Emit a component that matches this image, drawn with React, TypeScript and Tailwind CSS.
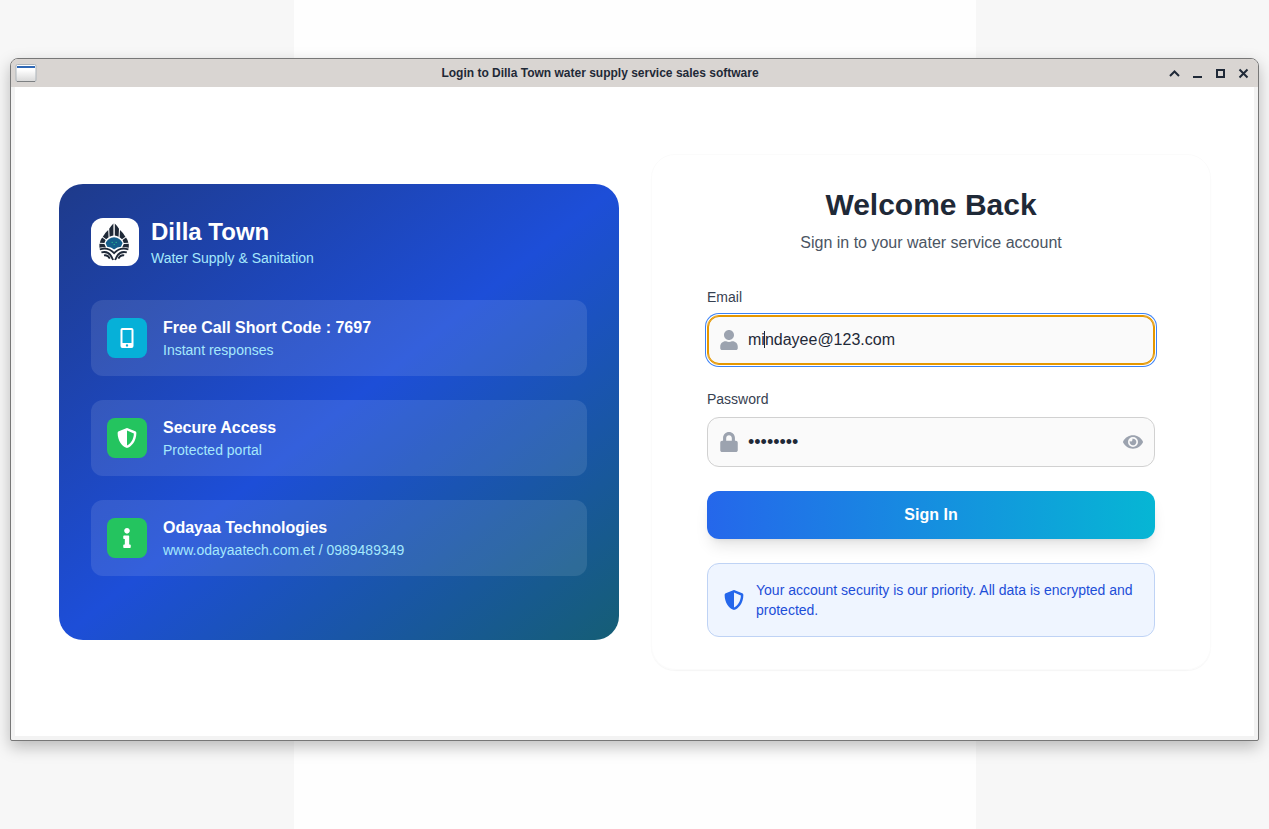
import * as React from "react";
import { FaEye, FaInfo, FaLock, FaShieldAlt, FaUser } from "react-icons/fa";

interface FeatureProps {
  icon: React.ReactNode;
  color: string;
  title: string;
  detail: string;
}

const PhoneIcon = () => (
  <svg viewBox="0 0 20 20" className="h-5 w-5" fill="currentColor" aria-hidden="true">
    <path
      fillRule="evenodd"
      d="M5.4 0 H14.6 Q16.5 0 16.5 1.9 V18.1 Q16.5 20 14.6 20 H5.4 Q3.5 20 3.5 18.1 V1.9 Q3.5 0 5.4 0 Z M5.5 1.9 V14.9 H14.5 V1.9 Z M10 16.2 A1.2 1.2 0 1 0 10 18.6 A1.2 1.2 0 1 0 10 16.2 Z"
    />
  </svg>
);

const FEATURES: FeatureProps[] = [
  {
    icon: <PhoneIcon />,
    color: "bg-[#06b0d8]",
    title: "Free Call Short Code : 7697",
    detail: "Instant responses",
  },
  {
    icon: <FaShieldAlt className="h-5 w-5" />,
    color: "bg-[#24c45f]",
    title: "Secure Access",
    detail: "Protected portal",
  },
  {
    icon: <FaInfo className="h-5 w-5" />,
    color: "bg-[#24c45f]",
    title: "Odayaa Technologies",
    detail: "www.odayaatech.com.et / 0989489349",
  },
];

const Feature = ({ icon, color, title, detail }: FeatureProps) => (
  <li className="flex items-center gap-4 rounded-xl bg-white/10 p-4">
    <div className={`flex h-10 w-10 shrink-0 items-center justify-center rounded-lg text-white ${color}`}>
      {icon}
    </div>
    <div>
      <h3 className="text-base font-bold text-white">{title}</h3>
      <p className="text-sm text-[#a5e8fc]">{detail}</p>
    </div>
  </li>
);

const Logo = () => (
  <svg viewBox="0 0 48 48" className="h-12 w-12" aria-hidden="true">
    <g fill="#1f2937">
      {/* Petals */}
      <path d="M22.4 5.6 L22.4 17.6 Q20.4 17.8 18.6 18.8 L18.2 10.8 Q20 8 22.4 5.6 Z" />
      <path d="M23.8 5.6 L23.8 17.6 Q25.8 17.8 27.6 18.8 L28 10.8 Q26.2 8 23.8 5.6 Z" />
      <path d="M17.2 12 L17.6 19.2 L15.2 21.2 L11.8 18.8 Q13.8 15 17.2 12 Z" />
      <path d="M29 12 L28.6 19.2 L31 21.2 L34.4 18.8 Q32.4 15 29 12 Z" />
      <path d="M11.2 19.6 L14.6 22 L13.4 24.9 L8.8 24.7 Q9.4 22 11.2 19.6 Z" />
      <path d="M35 19.6 L31.6 22 L32.8 24.9 L37.4 24.7 Q36.8 22 35 19.6 Z" />
      <path d="M8.4 25.7 L13.4 25.9 L15 29.6 Q11 28.9 8.4 29.8 Z" />
      <path d="M37.8 25.7 L32.8 25.9 L31.2 29.6 Q35.2 28.9 37.8 29.8 Z" />
    </g>
    {/* Water drop core */}
    <path
      d="M14.6 25 Q17 19.6 23.1 19.2 Q29.2 19.6 31.6 25 L30 28.8 Q26 29 23.1 31.6 Q20.2 29 16.2 28.8 Z"
      fill="#155e8a"
    />
    <path d="M20.6 24.4h1.2M24.6 24.4h1.2M22.6 26.6h1.2" stroke="#2cc08d" strokeWidth="1" />
    <g fill="none" stroke="#1f2937" strokeWidth="1.8">
      <path d="M8.8 31.4 Q17.4 28.8 23.1 35.2 Q28.8 28.8 37.4 31.4" />
      <path d="M10.4 34.4 Q18.6 32.2 22.1 42" />
      <path d="M35.8 34.4 Q27.6 32.2 24.1 42" />
      <path d="M13 37.4 Q17 36.6 18.8 40.6" />
      <path d="M33.2 37.4 Q29.2 36.6 27.4 40.6" />
    </g>
  </svg>
);

interface WindowButtonProps {
  label: string;
  path: string;
}

const WINDOW_BUTTONS: WindowButtonProps[] = [
  { label: "Roll up", path: "M2 9 L6.5 4.5 L11 9" },
  { label: "Minimize", path: "M2 10 H11" },
  { label: "Maximize", path: "M3 3 H10 V10 H3 Z" },
  { label: "Close", path: "M2.5 2.5 L10.5 10.5 M10.5 2.5 L2.5 10.5" },
];

const TitleBar = () => (
  <header className="flex h-7 items-center bg-[#d9d5d2] pr-[3px] pl-1">
    <svg viewBox="0 0 22 18" className="h-[18px] w-[22px]" aria-hidden="true">
      <defs>
        <linearGradient id="pane" x1="0" y1="0" x2="0" y2="1">
          <stop offset="0.3" stopColor="#ffffff" />
          <stop offset="1" stopColor="#d8d8d8" />
        </linearGradient>
      </defs>
      <rect x="1" y="0.5" width="20" height="17" rx="1.5" fill="url(#pane)" stroke="#adb5bb" />
      <path d="M2 3 H20" stroke="#2f68b5" strokeWidth="2" />
      <path d="M2 17.5 H20" stroke="#7d8082" />
    </svg>
    <h1 className="flex-1 text-center text-xs font-bold text-[#1f2937]">
      Login to Dilla Town water supply service sales software
    </h1>
    <div className="flex">
      {WINDOW_BUTTONS.map((button) => (
        <button
          key={button.label}
          type="button"
          aria-label={button.label}
          className="flex h-7 w-[23px] items-center justify-center text-[#1f2937]"
        >
          <svg viewBox="0 0 13 13" className="h-[13px] w-[13px]" fill="none" stroke="currentColor" strokeWidth="2">
            <path d={button.path} />
          </svg>
        </button>
      ))}
    </div>
  </header>
);

const BrandPanel = () => (
  <section className="rounded-3xl bg-[linear-gradient(to_bottom_right,#1e3a8a_0%,#1d4ed8_50%,#155e75_100%)] px-8 pt-8 pb-16">
    <div className="mb-8 flex items-center gap-3">
      <div className="overflow-hidden rounded-xl bg-white">
        <Logo />
      </div>
      <div>
        <h2 className="text-2xl font-bold text-white">Dilla Town</h2>
        <p className="text-sm text-[#a5e8fc]">Water Supply &amp; Sanitation</p>
      </div>
    </div>
    <ul className="space-y-6">
      {FEATURES.map((feature) => (
        <Feature key={feature.title} {...feature} />
      ))}
    </ul>
  </section>
);

const LoginForm = () => {
  const [email, setEmail] = React.useState("mindayee@123.com");
  const [password, setPassword] = React.useState("12345678");
  const [visible, setVisible] = React.useState(false);

  return (
    <section className="rounded-3xl border border-[#fbfbfb] p-8 shadow-[0_1px_1px_rgba(0,0,0,0.04)]">
      <div className="mx-auto max-w-md">
        <div className="mb-8 text-center">
          <h2 className="text-3xl font-bold text-[#1f2937]">Welcome Back</h2>
          <p className="mt-2 text-base text-[#4b5563]">Sign in to your water service account</p>
        </div>

        <form className="space-y-6" onSubmit={(e) => e.preventDefault()}>
          <div>
            <label htmlFor="email" className="mb-2 block text-sm text-[#374151]">
              Email
            </label>
            <div className="relative">
              <FaUser className="absolute top-[15px] left-3 h-5 w-5 text-[#9ca3af]" />
              <input
                id="email"
                type="email"
                value={email}
                onChange={(e) => setEmail(e.target.value)}
                className="block w-full rounded-xl border border-[#e59700] bg-[#fafafa] py-3 pr-4 pl-10 text-base text-[#1f2937] shadow-[inset_0_0_0_1px_#e59700,0_0_0_1px_#ffffff,0_0_0_2px_#3b82f6] outline-none"
              />
              {/* Text cursor */}
              <span className="absolute top-4 left-[57px] h-[17px] w-px bg-[#1f2937]" />
            </div>
          </div>

          <div>
            <label htmlFor="password" className="mb-2 block text-sm text-[#374151]">
              Password
            </label>
            <div className="relative">
              <FaLock className="absolute top-[15px] left-3 h-5 w-5 text-[#9ca3af]" />
              <input
                id="password"
                type={visible ? "text" : "password"}
                value={password}
                onChange={(e) => setPassword(e.target.value)}
                className="block w-full rounded-xl border border-[#d1d1d1] bg-[#fafafa] px-10 py-3 text-lg leading-6 text-[#1f2937] outline-none"
              />
              <button
                type="button"
                aria-label="Show password"
                onClick={() => setVisible(!visible)}
                className="absolute top-[15px] right-3 text-[#9ca3af]"
              >
                <FaEye className="h-5 w-5" />
              </button>
            </div>
          </div>

          <button
            type="submit"
            className="block w-full rounded-xl bg-[linear-gradient(90deg,#2567eb,#06b6d4)] py-3 text-base font-bold text-white shadow-lg"
          >
            Sign In
          </button>

          <div className="flex items-center gap-3 rounded-xl border border-[#bfd3f5] bg-[#eff5ff] p-4">
            <FaShieldAlt className="h-5 w-5 shrink-0 text-[#2567eb]" />
            <p className="text-sm text-[#1d4ed8]">
              Your account security is our priority. All data is encrypted and protected.
            </p>
          </div>
        </form>
      </div>
    </section>
  );
};

export default function App() {
  return (
    <div className="relative min-h-screen bg-[#f7f7f7] px-[10px] pt-[58px] pb-[88px] font-['Liberation_Sans',Arial,sans-serif]">
      {/* Page behind the window */}
      <div className="absolute inset-y-0 right-[293px] left-[294px] bg-[#fefefe]" />

      <div className="relative overflow-hidden rounded-t-lg rounded-b-xs border border-[#777777] bg-[#f3f3f3] shadow-[0_6px_16px_rgba(0,0,0,0.25)]">
        <TitleBar />
        <main className="mx-1 mb-1 bg-white pt-[67px] pr-[43px] pb-[66px] pl-11">
          <div className="mx-auto grid max-w-6xl grid-cols-1 items-center gap-8 md:grid-cols-2">
            <BrandPanel />
            <LoginForm />
          </div>
        </main>
      </div>
    </div>
  );
}
